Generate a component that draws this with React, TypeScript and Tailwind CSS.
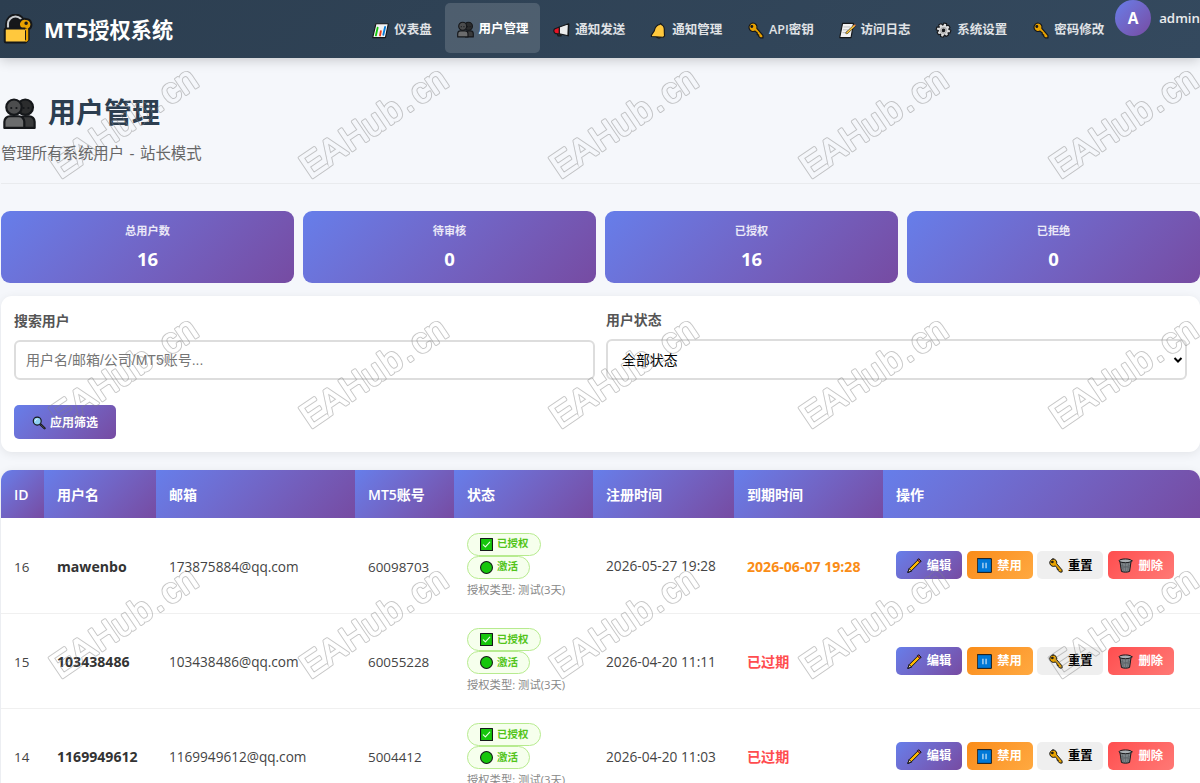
import type { ReactNode } from "react";
import clsx from "clsx";

type IconProps = { className?: string };

function Svg({ className, children }: { className?: string; children: ReactNode }) {
    return (
        <svg viewBox="0 0 24 24" className={clsx("shrink-0", className)} stroke="#15171a" strokeWidth="1.6" strokeLinejoin="round" strokeLinecap="round" fill="none">
            {children}
        </svg>
    );
}

function LockKeyIcon({ className }: IconProps) {
    return (
        <Svg className={className}>
            <path d="M3.500 12V8a6.500 6.500 0 0 1 13 0v4z" strokeWidth="3.600" fill="#15171a" />
            <path d="M4 12V8a6 6 0 0 1 12 0v4" stroke="#c9cccf" strokeWidth="1.700" />
            <path d="M18.500 4a4.400 4.400 0 0 1 2 8.200v8.300l-2.500 2-3-2V12A4.400 4.400 0 0 1 18.500 4z" fill="#e8a200" />
            <rect x="1.400" y="11.500" width="17" height="11.200" rx="1.200" fill="#ffc83d" />
            <path d="M18.400 12.500l1 .3v8l-1 .7" fill="#e8a200" stroke="#e8a200" />
            <circle cx="18.500" cy="7.300" r=".6" fill="#15171a" />
        </Svg>
    );
}

function UsersIcon({ className }: IconProps) {
    return (
        <Svg className={className}>
            <circle cx="16.200" cy="7.400" r="5.600" fill="#2b2c2d" />
            <path d="M12 22.500v-4.500a4 4 0 0 1 4-4h3a4 4 0 0 1 4 4v4.500z" fill="#3a3b3c" />
            <circle cx="8" cy="7.400" r="5.600" fill="#4c4d4e" />
            <path d="M1 22.500V18a4 4 0 0 1 4-4h6.500a4 4 0 0 1 4 4v4.500z" fill="#6b6c6d" />
            <g fill="#15171a" stroke="none">
                <circle cx="6" cy="8" r=".8" />
                <circle cx="9.800" cy="8" r=".8" />
                <circle cx="15" cy="8" r=".8" />
                <circle cx="18.500" cy="8" r=".8" />
            </g>
        </Svg>
    );
}

function ChartIcon({ className }: IconProps) {
    return (
        <Svg className={className}>
            <path d="M5.500 2.500H23l-4 19.500H1z" fill="#f2f2f2" />
            <path d="M8 8L5.500 19" stroke="#16c60c" strokeWidth="2.600" />
            <path d="M12.500 13l-1.200 6" stroke="#f03a17" strokeWidth="2.600" />
            <path d="M18.500 7L16 18" stroke="#0078d7" strokeWidth="2.600" />
        </Svg>
    );
}

function MegaphoneIcon({ className }: IconProps) {
    return (
        <Svg className={className}>
            <path d="M6 15l1 4.500h4.500L11 15z" fill="#383838" />
            <path d="M2 10l7-3v10l-5-.5c-3-1-3.500-4.500-2-6.500z" fill="#e81224" />
            <path d="M9 7l13-4.500-.5 17L9 16.500z" fill="#ececec" />
            <path d="M22 3l-.5 16" strokeWidth="2" />
        </Svg>
    );
}

function BellIcon({ className }: IconProps) {
    return (
        <Svg className={className}>
            <path d="M9 20.500a3.500 3 0 0 0 6.500.5z" fill="#e8a200" />
            <path d="M14 3.500c-4.500.5-7 4.500-8 9L2 18.500v2l16.500 1 2-1.500-.3-6.500c.3-5-.7-8.500-3.700-9.500L15 2z" fill="#ffc83d" />
        </Svg>
    );
}

function KeyIcon({ className }: IconProps) {
    return (
        <Svg className={className}>
            <path d="M8 1.500a5.900 5.900 0 0 1 5.900 7.600L22.500 19v3.500h-3.700l-2.300-2.300v-2l-2-.2v-2.500l-3-2.700A6 6 0 1 1 8 1.500z" fill="#e8a200" />
            <circle cx="6.800" cy="6.300" r="1.300" fill="#15171a" />
        </Svg>
    );
}

function MemoIcon({ className }: IconProps) {
    return (
        <Svg className={className}>
            <path d="M5 2h15.500L17 22H1z" fill="#f2f2f2" />
            <path d="M7 7h8M6 11h6M5.500 15h4" stroke="#aaa" strokeWidth="1" />
            <path d="M22 5L11 15.500" strokeWidth="3.400" />
            <path d="M21.500 5.500L11 15.500" stroke="#ffc83d" strokeWidth="2.200" />
            <path d="M22.500 4.500l-.7.700" stroke="#f7894a" strokeWidth="2.200" />
        </Svg>
    );
}

function GearIcon({ className }: IconProps) {
    return (
        <Svg className={className}>
            <g transform="rotate(14 12 12)">
                <path d="M10 1.500h4l.6 2.800 2.600-1.300 2.800 2.800-1.300 2.600 3.300.6v4l-3 .8 1.500 2.700-2.800 2.800-2.800-1.500-.9 3.500h-4l-.6-3.300-2.800 1.500-2.800-2.800L5.300 14l-3.600-.6v-4l3.400-.6-1.600-2.600 2.800-2.800L9.200 5z" fill="#dcdcdc" />
                <circle cx="12" cy="11.800" r="4" stroke="#aaa" fill="#e4e4e4" />
                <circle cx="12" cy="11.800" r="1.800" fill="#15171a" />
            </g>
        </Svg>
    );
}

function SearchIcon({ className }: IconProps) {
    return (
        <Svg className={className}>
            <path d="M14.500 14.500l7 6.500" strokeWidth="4" />
            <path d="M15 15l6 5.500" stroke="#555" strokeWidth="1.400" />
            <circle cx="9" cy="8.700" r="6.800" fill="#8fd0f2" strokeWidth="2" />
            <path d="M5.500 8.500A4 4 0 0 1 9 5" stroke="#e6f7ff" />
        </Svg>
    );
}

function PencilIcon({ className }: IconProps) {
    return (
        <Svg className={className}>
            <path d="M1.500 22.500l2-5.500L19 1.500l3.500 3.500L7 20.500z" fill="#ffb900" />
            <path d="M19 1.500l3.500 3.500-2 2L17 3.500z" fill="#e74856" />
            <path d="M1.500 22.500l2-5.500L7 20.500z" fill="#f5d6b0" />
        </Svg>
    );
}

function PauseIcon({ className }: IconProps) {
    return (
        <Svg className={className}>
            <rect x="1" y="1" width="22" height="22" fill="#0078d7" />
            <path d="M9.500 7.500v9M14.500 7.500v9" stroke="#dcecfa" strokeWidth="1.800" strokeLinecap="butt" />
        </Svg>
    );
}

function TrashIcon({ className }: IconProps) {
    return (
        <Svg className={className}>
            <path d="M3 5l2.500 16.500c3 1.500 10 1.500 13 0L21 5z" fill="#7b8387" />
            <path d="M7 9l1.500 12M12 9v13M17 9l-1.500 12M5 12l14 4M5 17l14-5" stroke="#5a6165" strokeWidth="1" />
            <ellipse cx="12" cy="4.500" rx="10.300" ry="3" fill="#a8afb3" />
        </Svg>
    );
}

function CheckIcon({ className }: IconProps) {
    return (
        <Svg className={className}>
            <rect x="1" y="1" width="22" height="22" fill="#16c60c" strokeWidth="2" />
            <path d="M6 12.500l4 4 8-9" stroke="#e8ffe6" strokeWidth="2" />
        </Svg>
    );
}

function DotIcon({ className }: IconProps) {
    return (
        <Svg className={className}>
            <circle cx="12" cy="12" r="11" fill="#16c60c" strokeWidth="2" />
        </Svg>
    );
}

const navItems = [
    { label: "仪表盘", icon: ChartIcon },
    { label: "用户管理", icon: UsersIcon, active: true },
    { label: "通知发送", icon: MegaphoneIcon },
    { label: "通知管理", icon: BellIcon },
    { label: "API密钥", icon: KeyIcon },
    { label: "访问日志", icon: MemoIcon },
    { label: "系统设置", icon: GearIcon },
    { label: "密码修改", icon: KeyIcon },
];

const stats = [
    { label: "总用户数", value: 16 },
    { label: "待审核", value: 0 },
    { label: "已授权", value: 16 },
    { label: "已拒绝", value: 0 },
];

const columns = [
    { label: "ID", width: "w-[43px]" },
    { label: "用户名", width: "w-[112px]" },
    { label: "邮箱", width: "w-[199px]" },
    { label: "MT5账号", width: "w-[99px]" },
    { label: "状态", width: "w-[139px]" },
    { label: "注册时间", width: "w-[141px]" },
    { label: "到期时间", width: "w-[149px]" },
    { label: "操作", width: "w-[317px]" },
];

const users = [
    { id: 16, name: "mawenbo", email: "173875884@qq.com", account: "60098703", created: "2026-05-27 19:28", expires: "2026-06-07 19:28", expired: false },
    { id: 15, name: "103438486", email: "103438486@qq.com", account: "60055228", created: "2026-04-20 11:11", expires: "已过期", expired: true },
    { id: 14, name: "1169949612", email: "1169949612@qq.com", account: "5004412", created: "2026-04-20 11:03", expires: "已过期", expired: true },
];

const actions = [
    { label: "编辑", icon: PencilIcon, style: "bg-linear-135 from-[#667eea] to-[#764ba2] text-white" },
    { label: "禁用", icon: PauseIcon, style: "bg-linear-135 from-[#fa8c16] to-[#ffa940] text-white" },
    { label: "重置", icon: KeyIcon, style: "bg-[#efefef] text-black" },
    { label: "删除", icon: TrashIcon, style: "bg-linear-135 from-[#ff4d4f] to-[#ff7875] text-white" },
];

function Badge({ icon: Icon, children }: { icon: (p: IconProps) => ReactNode; children: ReactNode }) {
    return (
        <span className="flex h-[23px] w-fit items-center gap-1 rounded-full border border-[#b7eb8f] bg-[#f6ffed] pr-[11px] pl-3 text-[10.5px] font-semibold text-[#52c41a]">
            <Icon className="size-[13px]" />
            {children}
        </span>
    );
}

const markColumns = [48, 298, 548, 798, 1048];
const markRows = [0, 250, 500];
const markX = "9.500 32.500 58.500 81 103 120.500 138 157";

function Watermark() {
    const marks = markRows.flatMap((y) => markColumns.map((x) => ({ x: x + 14, y: y + 178 })));
    const texts = marks.map(({ x, y }) => (
        <text key={`${x}-${y}`} x={markX} y="0" transform={`translate(${x} ${y}) rotate(-34)`}>
            EAHub.cn
        </text>
    ));

    return (
        <svg className="pointer-events-none absolute inset-0 h-[783px] w-[1200px] font-['Liberation_Sans',sans-serif]" fontSize="35" textAnchor="middle" strokeLinejoin="round">
            {/* keeps only the outer ring of each letter */}
            <mask id="ring" maskUnits="userSpaceOnUse" x="0" y="0" width="1200" height="783">
                <g fill="#fff" stroke="#fff" strokeWidth="3">{texts}</g>
                <g fill="#000" stroke="#000" strokeWidth="1.200">{texts}</g>
            </mask>
            <rect width="1200" height="783" fill="#808080" fillOpacity="0.450" mask="url(#ring)" />
        </svg>
    );
}

export default function App() {
    return (
        <div className="relative h-[783px] w-[1200px] overflow-hidden bg-[#f5f7fb] font-['Open_Sans','Noto_Sans_CJK_SC',sans-serif] text-[#444]">
            <header className="relative flex h-[58px] items-center bg-linear-135 from-[#2c3e50] to-[#34495e] shadow-[0_2px_12px_rgba(0,0,0,0.2)]">
                <div className="flex w-[361px] items-center gap-[11px] pl-[3px]">
                    <LockKeyIcon className="size-[30px]" />
                    <span className="pt-0.5 text-[21.2px] font-bold text-white">MT5授权系统</span>
                </div>
                <nav className="flex h-full gap-[1.800px] pt-[3px]">
                    {navItems.map(({ label, icon: Icon, active }) => (
                        <a
                            key={label}
                            className={clsx(
                                "flex h-[50px] items-center gap-[5px] rounded-[5px] px-3 pr-[11px] text-[12.5px] font-semibold whitespace-nowrap",
                                active ? "bg-white/15 pt-0.5 text-white" : "pt-1 text-white/85"
                            )}
                        >
                            <Icon className="size-[17px]" />
                            {label}
                        </a>
                    ))}
                </nav>
                <div className="flex h-full items-start">
                    <div className="flex size-9 items-center justify-center rounded-full bg-linear-135 from-[#667eea] to-[#764ba2] pt-0.5 text-[15.5px] font-bold text-white">A</div>
                    <span className="ml-2 pt-[9px] text-[13.3px] leading-[18px] font-semibold text-white/90">admin</span>
                </div>
            </header>

            <main className="pl-px">
                <section className="h-[126px] border-b border-[#e9ebee] pt-[33px]">
                    <h1 className="flex h-11 items-center gap-3 pl-0.5 text-[28px] font-bold text-[#2c3e50]">
                        <UsersIcon className="size-[33px]" />
                        <span className="-mt-0.5">用户管理</span>
                    </h1>
                    <p className="mt-2 text-[15.4px] leading-[22px] text-[#666] [word-spacing:1.500px]">管理所有系统用户 - 站长模式</p>
                </section>

                <section className="mt-[27px] grid grid-cols-4 gap-[9px]">
                    {stats.map((stat) => (
                        <div key={stat.label} className="flex h-[72px] flex-col items-center rounded-[9px] bg-linear-135 from-[#667eea] to-[#764ba2] pt-3 text-white">
                            <span className="text-[11.2px] leading-4 font-semibold text-white/85">{stat.label}</span>
                            <span className="mt-2 text-[18.5px] leading-6 font-bold">{stat.value}</span>
                        </div>
                    ))}
                </section>

                <section className="mt-[13px] h-[156px] rounded-[11px] bg-white px-[13px] pt-3.5 shadow-[0_2px_10px_rgba(0,0,0,0.08)]">
                    <div className="grid grid-cols-2 gap-[11px]">
                        <label className="pt-px text-[13.9px] leading-5 font-semibold text-[#555]">
                            搜索用户
                            <input
                                placeholder="用户名/邮箱/公司/MT5账号..."
                                className="mt-[9px] block h-10 w-full rounded-md border-2 border-[#ddd] bg-white px-2.5 font-['Liberation_Sans','Noto_Sans_CJK_SC',sans-serif] text-[14px] font-normal placeholder:text-[#757575]"
                            />
                        </label>
                        <label className="text-[13.9px] leading-5 font-semibold text-[#555]">
                            用户状态
                            <span className="mt-[9px] flex h-[41px] items-center justify-between rounded-md border-2 border-[#ddd] bg-white pr-0.5 pl-[14px] font-normal text-black">
                                全部状态
                                <svg viewBox="0 0 10 10" className="size-2.5" fill="none" stroke="#000" strokeWidth="2">
                                    <path d="M1.500 3L5 6.500 8.500 3" />
                                </svg>
                            </span>
                        </label>
                    </div>
                    <button className="mt-[25px] flex h-[34px] w-[102px] items-center justify-center gap-1 rounded-[5px] bg-linear-135 from-[#667eea] to-[#764ba2] pt-0.5 text-[12px] font-bold text-white">
                        <SearchIcon className="size-[14px]" />
                        应用筛选
                    </button>
                </section>

                <section className="mt-[18px] overflow-hidden rounded-t-[11px] bg-white shadow-[0_2px_10px_rgba(0,0,0,0.08)]">
                    <table className="w-[1199px] table-fixed border-collapse text-[13.4px]">
                        <thead>
                            <tr className="h-12">
                                {columns.map((column) => (
                                    <th key={column.label} className={clsx("bg-linear-135 from-[#667eea] to-[#764ba2] px-[13px] text-left text-[14px] font-semibold whitespace-nowrap text-white", column.width)}>
                                        {column.label}
                                    </th>
                                ))}
                            </tr>
                        </thead>
                        <tbody>
                            {users.map((user) => (
                                <tr key={user.id} className="h-[95px] border-b border-[#f0f0f0]">
                                    <td className="px-[13px] pt-[3px]">{user.id}</td>
                                    <td className="px-[13px] pt-[3px] text-[14.1px] font-bold text-[#333]">{user.name}</td>
                                    <td className="px-[13px] pt-[3px] text-[13.6px]">{user.email}</td>
                                    <td className="px-[13px] pt-[3px]">{user.account}</td>
                                    <td className="px-[13px]">
                                        <Badge icon={CheckIcon}>已授权</Badge>
                                        <Badge icon={DotIcon}>激活</Badge>
                                        <div className="mt-[3px] text-[11.3px] leading-4 whitespace-nowrap text-[#888]">授权类型: 测试(3天)</div>
                                    </td>
                                    <td className="px-[13px] pt-[3px] text-[13.7px] whitespace-nowrap">{user.created}</td>
                                    <td className={clsx("px-[13px] pt-[3px] text-[14.1px] font-bold whitespace-nowrap", user.expired ? "text-[#ff4d4f]" : "text-[#fa8c16]")}>{user.expires}</td>
                                    <td className="px-[13px]">
                                        <div className="flex gap-[4.600px]">
                                            {actions.map(({ label, icon: Icon, style }) => (
                                                <button key={label} className={clsx("flex h-7 w-[66px] items-center justify-center gap-[5px] rounded-[5px] pt-px text-[12.3px] font-bold", style)}>
                                                    <Icon className="size-[15px]" />
                                                    {label}
                                                </button>
                                            ))}
                                        </div>
                                    </td>
                                </tr>
                            ))}
                        </tbody>
                    </table>
                </section>
            </main>

            <Watermark />
        </div>
    );
}
